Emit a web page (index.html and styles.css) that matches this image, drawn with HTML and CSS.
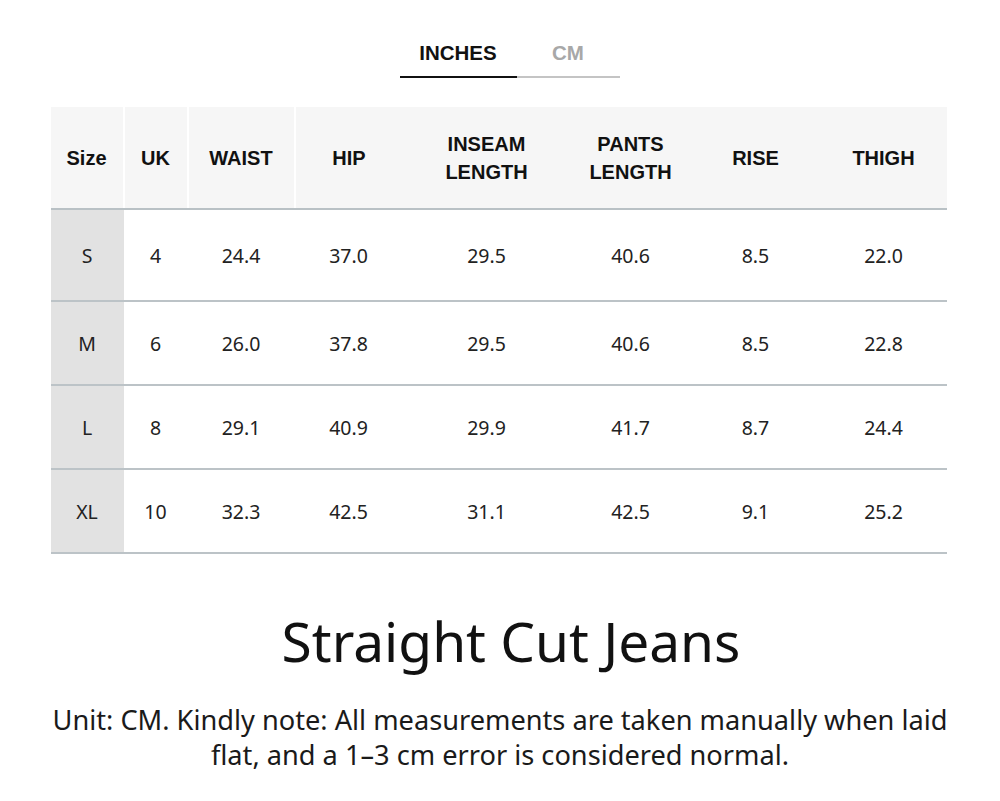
FILE: index.html
```html
<!DOCTYPE html>
<html lang="en">
<head>
<meta charset="utf-8">
<title>Straight Cut Jeans – Size Chart</title>
<link rel="stylesheet" href="styles.css">
</head>
<body>
<div class="page">
  <div class="tabs">
    <div class="tab active">INCHES</div>
    <div class="tab">CM</div>
  </div>
  <table class="chart">
    <colgroup>
      <col style="width:73px"><col style="width:64px"><col style="width:107px"><col style="width:108px">
      <col style="width:168px"><col style="width:120px"><col style="width:130px"><col style="width:126px">
    </colgroup>
    <thead>
      <tr>
        <th class="div">Size</th><th class="div">UK</th><th class="div">WAIST</th><th>HIP</th>
        <th>INSEAM<br>LENGTH</th><th>PANTS<br>LENGTH</th><th>RISE</th><th>THIGH</th>
      </tr>
    </thead>
    <tbody>
      <tr class="first"><td class="size">S</td><td>4</td><td>24.4</td><td>37.0</td><td>29.5</td><td>40.6</td><td>8.5</td><td>22.0</td></tr>
      <tr><td class="size">M</td><td>6</td><td>26.0</td><td>37.8</td><td>29.5</td><td>40.6</td><td>8.5</td><td>22.8</td></tr>
      <tr><td class="size">L</td><td>8</td><td>29.1</td><td>40.9</td><td>29.9</td><td>41.7</td><td>8.7</td><td>24.4</td></tr>
      <tr><td class="size">XL</td><td>10</td><td>32.3</td><td>42.5</td><td>31.1</td><td>42.5</td><td>9.1</td><td>25.2</td></tr>
    </tbody>
  </table>
  <h1 class="title">Straight Cut Jeans</h1>
  <p class="note">Unit: CM. Kindly note: All measurements are taken manually when laid flat, and a 1–3 cm error is considered normal.</p>
</div>
</body>
</html>
```
FILE: styles.css
```css
html, body {
  margin: 0;
  padding: 0;
  background: #ffffff;
}
body {
  font-family: "Noto Sans", "Open Sans", sans-serif;
  color: #1a1a1a;
}
.page {
  width: 1000px;
  height: 801px;
  display: flex;
  flex-direction: column;
  align-items: center;
  padding-top: 41px;
  box-sizing: border-box;
}
.tabs {
  display: flex;
  margin-left: 19px;
}
.tab {
  font-family: "Liberation Sans", Arial, sans-serif;
  font-weight: 700;
  font-size: 20.5px;
  line-height: 24px;
  color: #a8a8a8;
  text-align: center;
  width: 103px;
  padding-bottom: 11px;
  border-bottom: 2px solid #c4c4c4;
}
.tab.active {
  width: 117px;
  color: #111111;
  border-bottom-color: #111111;
}
.chart {
  margin-top: 29px;
  width: 896px;
  margin-left: -3px;
  border-collapse: collapse;
  table-layout: fixed;
}
.chart th {
  background: #f6f6f6;
  height: 101px;
  padding: 0;
  font-family: "Liberation Sans", Arial, sans-serif;
  font-weight: 700;
  font-size: 20px;
  line-height: 28px;
  color: #111111;
  text-align: center;
  vertical-align: middle;
  border-bottom: 2px solid #b9c1c5;
}
.chart th.div {
  border-right: 2px solid #ffffff;
}
.chart td {
  height: 82px;
  padding: 0;
  text-align: center;
  vertical-align: middle;
  font-size: 19.5px;
  color: #222222;
  border-bottom: 2px solid #bcc3c7;
}
.chart tr.first td {
  height: 90px;
}
.chart td.size {
  background: #e2e2e2;
}
.title {
  margin: 52px 0 0 22px;
  font-weight: 400;
  font-size: 55px;
  line-height: 70px;
  color: #111111;
}
.note {
  margin: 26px 0 0;
  width: 920px;
  text-align: center;
  font-size: 27.2px;
  line-height: 35px;
  color: #1a1a1a;
}
```
